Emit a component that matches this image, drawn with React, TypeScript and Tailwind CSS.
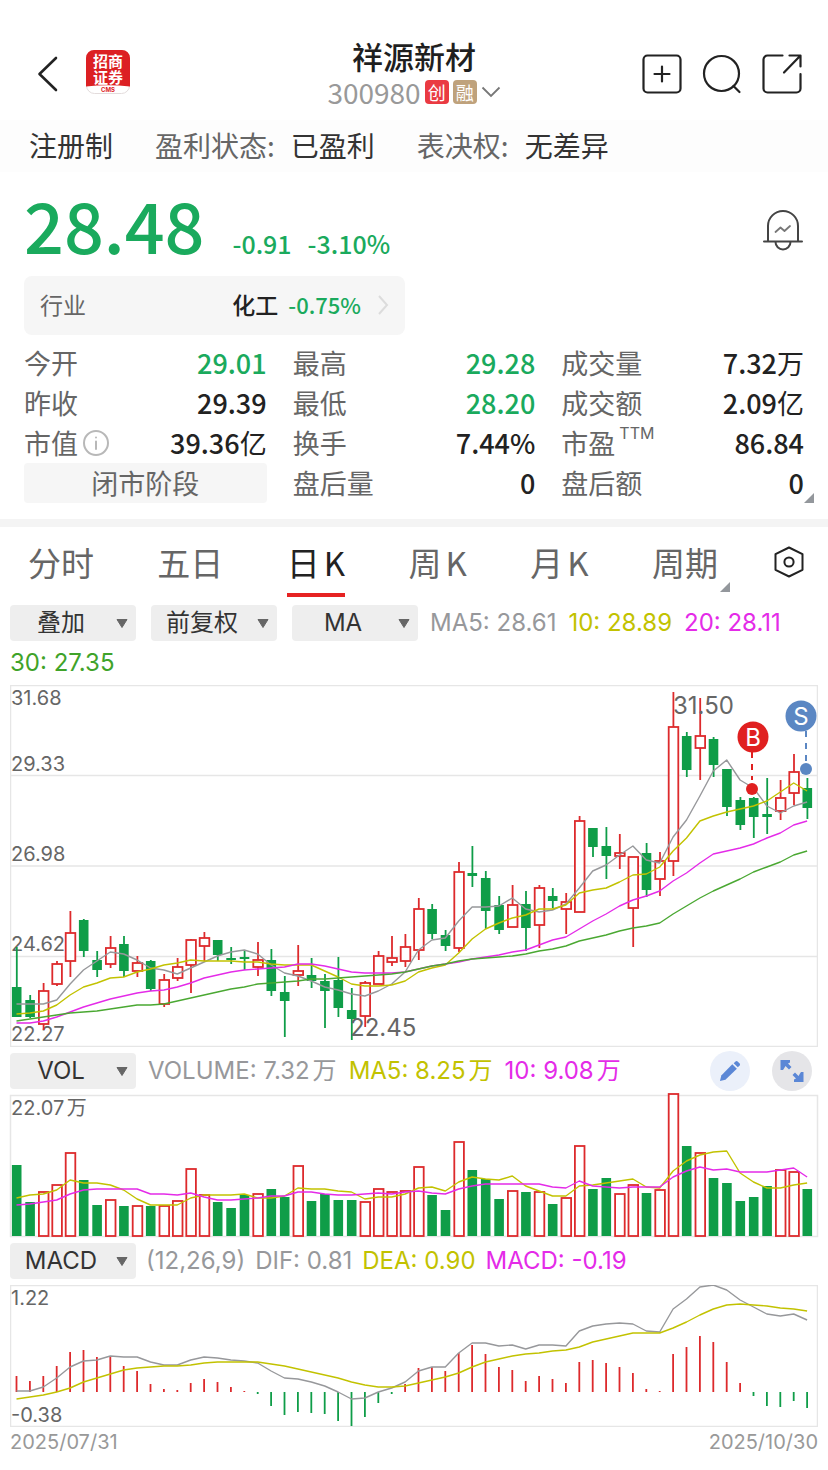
import { ReactNode } from "react";

const RED = "#dd2a2c";
const GREEN = "#0f9d48";
const GRAY = "#97989b";
const YELLOW = "#c2c200";
const MAGENTA = "#e42be8";
const LEAF = "#4aa832";

const STEP = 13.4;
const xAt = (i: number) => 16.5 + i * STEP;

type Candle = [up: 0 | 1, high: number, top: number, bottom: number, low: number];

const candles: Candle[] = [
  [0, 947, 987, 1017, 1017], [0, 995, 1000, 1017, 1018], [1, 983, 991, 1024, 1030], [1, 961, 964, 984, 986],
  [1, 911, 933, 961, 977], [0, 919, 920, 951, 957], [0, 951, 960, 970, 977], [1, 936, 948, 964, 968],
  [0, 936, 944, 971, 977], [1, 956, 963, 971, 977], [0, 960, 961, 989, 991], [1, 974, 980, 1004, 1007],
  [1, 958, 967, 978, 981], [1, 939, 940, 965, 993], [1, 932, 938, 946, 961], [0, 940, 940, 955, 961],
  [0, 947, 958, 960, 964], [0, 951, 957, 959, 970], [1, 942, 960, 967, 976], [0, 949, 960, 991, 996],
  [0, 976, 992, 1001, 1037], [1, 945, 971, 975, 986], [0, 958, 975, 981, 988], [0, 974, 981, 991, 1028],
  [0, 957, 980, 1008, 1017], [0, 988, 1010, 1019, 1040], [1, 981, 983, 1016, 1027], [1, 951, 956, 984, 984],
  [1, 936, 958, 962, 966], [1, 934, 947, 961, 967], [1, 898, 909, 950, 960], [0, 904, 909, 934, 939],
  [0, 930, 935, 946, 951], [1, 862, 872, 948, 952], [0, 846, 873, 876, 887], [0, 871, 878, 911, 929],
  [0, 896, 905, 930, 934], [1, 885, 905, 927, 927], [0, 891, 904, 928, 951], [1, 885, 888, 925, 948],
  [0, 888, 896, 901, 908], [1, 893, 902, 909, 934], [1, 816, 821, 912, 912], [0, 828, 828, 847, 857],
  [0, 827, 846, 856, 879], [1, 834, 853, 856, 869], [1, 857, 857, 908, 947], [0, 843, 853, 890, 897],
  [1, 852, 861, 879, 896], [1, 692, 727, 861, 876], [0, 732, 736, 770, 777], [1, 698, 736, 748, 780],
  [0, 737, 739, 765, 777], [0, 769, 769, 807, 816], [0, 797, 800, 825, 830], [0, 797, 798, 817, 838],
  [0, 778, 814, 817, 834], [1, 780, 798, 811, 820], [1, 754, 772, 793, 805], [0, 778, 788, 808, 819],
];

const ma5 = [
  1004, 1004, 1004, 1000, 984, 970, 961, 952, 954, 960, 968, 970, 974, 968, 962, 956, 952, 950, 954, 965,
  973, 976, 981, 987, 990, 994, 996, 991, 984, 972, 950, 940, 938, 921, 907, 907, 906, 898, 909, 912,
  910, 904, 888, 871, 865, 855, 846, 860, 863, 837, 820, 796, 771, 760, 780, 788, 806, 813, 806, 802,
];
const ma10 = [
  1014, 1013, 1011, 1005, 995, 987, 983, 978, 977, 972, 969, 965, 963, 960, 961, 961, 961, 962, 962, 964,
  965, 965, 965, 971, 977, 984, 986, 986, 985, 981, 972, 968, 965, 953, 939, 929, 923, 918, 915, 909,
  909, 905, 893, 890, 888, 882, 875, 874, 867, 851, 838, 821, 816, 812, 809, 806, 801, 792, 783, 791,
];
const ma20 = [
  1023, 1023, 1021, 1017, 1012, 1007, 1003, 999, 996, 993, 991, 990, 987, 983, 978, 975, 972, 970, 969, 968,
  967, 964, 964, 966, 969, 972, 973, 973, 973, 972, 969, 966, 964, 962, 959, 957, 955, 952, 950, 945,
  940, 937, 929, 921, 914, 906, 900, 896, 891, 881, 873, 863, 854, 851, 848, 844, 838, 833, 825, 821,
];
const ma30 = [
  1021, 1019, 1017, 1015, 1013, 1012, 1011, 1009, 1007, 1005, 1005, 1004, 1001, 998, 995, 992, 989, 987, 984, 983,
  982, 981, 979, 979, 978, 977, 976, 975, 974, 972, 969, 966, 964, 961, 959, 958, 957, 956, 954, 951,
  949, 946, 941, 938, 935, 931, 928, 926, 923, 914, 906, 898, 891, 885, 879, 872, 867, 862, 855, 851,
];

const volumes = [
  1165, 1202, 1192, 1185, 1153, 1180, 1205, 1200, 1206, 1206, 1206, 1206, 1201, 1169, 1195, 1202, 1208, 1195, 1194, 1189,
  1197, 1166, 1201, 1194, 1200, 1200, 1202, 1189, 1192, 1191, 1167, 1195, 1210, 1142, 1170, 1179, 1199, 1191, 1192, 1192,
  1204, 1198, 1146, 1189, 1178, 1194, 1185, 1193, 1190, 1094, 1146, 1153, 1178, 1183, 1201, 1197, 1186, 1170, 1172, 1189,
];
const volMa5 = [
  1198, 1195, 1194, 1190, 1180, 1183, 1183, 1185, 1190, 1199, 1205, 1205, 1205, 1198, 1195, 1195, 1195, 1194, 1198, 1198,
  1196, 1188, 1189, 1189, 1191, 1192, 1199, 1197, 1197, 1194, 1188, 1187, 1191, 1182, 1177, 1179, 1180, 1176, 1186, 1191,
  1196, 1196, 1186, 1185, 1183, 1181, 1179, 1187, 1188, 1171, 1161, 1155, 1152, 1151, 1173, 1182, 1188, 1188, 1185, 1183,
];
const volMa10 = [
  1205, 1204, 1202, 1200, 1194, 1190, 1189, 1189, 1189, 1189, 1194, 1194, 1195, 1193, 1197, 1200, 1200, 1199, 1198, 1196,
  1196, 1192, 1192, 1194, 1195, 1195, 1194, 1193, 1194, 1192, 1191, 1193, 1194, 1189, 1186, 1184, 1184, 1184, 1184, 1184,
  1187, 1188, 1181, 1186, 1187, 1188, 1187, 1187, 1187, 1177, 1171, 1167, 1170, 1169, 1172, 1172, 1172, 1170, 1168, 1177,
];

const macd = [
  1376, 1381, 1376, 1366, 1352, 1350, 1357, 1357, 1366, 1371, 1384, 1389, 1390, 1383, 1379, 1382, 1387, 1391, 1394, 1406,
  1415, 1412, 1413, 1414, 1421, 1426, 1417, 1403, 1394, 1384, 1368, 1367, 1371, 1353, 1345, 1354, 1367, 1370, 1381, 1376,
  1379, 1383, 1362, 1360, 1363, 1367, 1373, 1389, 1391, 1354, 1347, 1336, 1342, 1362, 1383, 1396, 1406, 1407, 1401, 1408,
];
const dif = [
  1391, 1391, 1387, 1378, 1367, 1361, 1360, 1356, 1357, 1357, 1362, 1365, 1365, 1360, 1357, 1358, 1360, 1361, 1363, 1371,
  1378, 1379, 1382, 1386, 1392, 1399, 1398, 1392, 1388, 1382, 1371, 1367, 1367, 1353, 1343, 1343, 1346, 1345, 1349, 1345,
  1345, 1346, 1331, 1326, 1324, 1323, 1324, 1331, 1332, 1309, 1299, 1287, 1285, 1290, 1300, 1307, 1314, 1316, 1314, 1320,
];
const dea = [
  1399, 1397, 1395, 1392, 1388, 1382, 1378, 1374, 1370, 1368, 1367, 1366, 1366, 1365, 1363, 1362, 1362, 1362, 1362, 1364,
  1366, 1369, 1372, 1375, 1378, 1382, 1385, 1387, 1387, 1386, 1383, 1380, 1377, 1373, 1367, 1362, 1359, 1356, 1354, 1353,
  1351, 1350, 1347, 1342, 1339, 1336, 1333, 1333, 1333, 1328, 1322, 1315, 1309, 1305, 1304, 1305, 1306, 1308, 1309, 1311,
];

const stats = [
  { label: "今开", value: "29.01", green: true },
  { label: "最高", value: "29.28", green: true },
  { label: "成交量", value: "7.32", unit: "万" },
  { label: "昨收", value: "29.39" },
  { label: "最低", value: "28.20", green: true },
  { label: "成交额", value: "2.09", unit: "亿" },
  { label: "市值", value: "39.36", unit: "亿", info: true },
  { label: "换手", value: "7.44%" },
  { label: "市盈", value: "86.84", sup: "TTM" },
];

const tabs = ["分时", "五日", "日K", "周K", "月K", "周期"];

function Line({ points, color }: { points: number[]; color: string }) {
  return (
    <polyline
      points={points.map((y, i) => `${xAt(i)},${y}`).join(" ")}
      fill="none"
      stroke={color}
      strokeWidth="1.4"
      strokeLinejoin="round"
    />
  );
}

function Bar({ i, up, top, bottom }: { i: number; up: boolean; top: number; bottom: number }) {
  return up ? (
    <rect x={xAt(i) - 4.4} y={top} width="9.6" height={Math.max(bottom - top, 2)} fill="#fff" stroke={RED} strokeWidth="1.8" />
  ) : (
    <rect x={xAt(i) - 4.6} y={top} width="9.6" height={Math.max(bottom - top, 2)} fill={GREEN} />
  );
}

function Corner({ className }: { className: string }) {
  return (
    <svg viewBox="0 0 10 10" className={`absolute size-2.5 ${className}`} aria-hidden="true">
      <path d="M10 0v10H0z" fill="#93979c" />
    </svg>
  );
}

function Picker({ label, value }: { label: string; value: string }) {
  return (
    <span className="relative inline-flex h-9 w-[126px] shrink-0">
      <select
        aria-label={label}
        defaultValue={value}
        className="h-9 w-full appearance-none rounded bg-[#eeeeee] pr-6 text-center text-2xl leading-9 text-[#333333]"
      >
        <option>{value}</option>
      </select>
      <svg viewBox="0 0 12 9" className="pointer-events-none absolute top-3.5 right-2 h-[9px] w-3" aria-hidden="true">
        <path d="M1 .5h10L6 8.5z" fill="#666" stroke="#666" strokeLinejoin="round" />
      </svg>
    </span>
  );
}

function Reading({ className, children }: { className: string; children: ReactNode }) {
  return <span className={`text-2xl leading-10 whitespace-nowrap [text-autospace:normal] ${className}`}>{children}</span>;
}

function Logo() {
  return (
    <svg viewBox="0 0 44 44" className="-mt-1 size-11" role="img" aria-label="招商证券">
      <rect x=".5" y=".5" width="43" height="43" rx="8" fill="#fff" stroke="#e3dcdc" />
      <path d="M0 36.500V8a8 8 0 0 1 8-8h28a8 8 0 0 1 8 8v28.500Q22 34 0 36.500z" fill="#dc2023" />
      <g textAnchor="middle">
        <text x="22" y="17" fill="#fff" fontSize="15" fontWeight="700">招商</text>
        <text x="22" y="33" fill="#fff" fontSize="15" fontWeight="700">证券</text>
        <text x="22" y="42" fill="#dc2023" fontSize="6" fontWeight="700" className="font-[Inter]">CMS</text>
      </g>
    </svg>
  );
}

function Header() {
  return (
    <header className="grid h-[112px] grid-cols-[1fr_auto_1fr] items-center px-[26px] pt-9">
      <div className="flex items-center gap-7 pl-2.5">
        <button aria-label="返回">
          <svg viewBox="0 0 22 38" className="h-[38px] w-[22px]" fill="none" stroke="#222" strokeWidth="2.600" strokeLinecap="round" strokeLinejoin="round">
            <path d="M20 3 3.500 19 20 35" />
          </svg>
        </button>
        <Logo />
      </div>
      <div className="flex flex-col items-center">
        <h1 className="text-[31px] leading-9 font-medium text-[#1f1f1f]">祥源新材</h1>
        <button className="flex h-9 items-center gap-1">
          <span className="text-[28px] leading-9 text-[#999999]">300980</span>
          <span className="size-6 rounded bg-[#ea3a42] text-center text-lg leading-6 text-white">创</span>
          <span className="size-6 rounded bg-[#bfa27c] text-center text-lg leading-6 text-white">融</span>
          <svg viewBox="0 0 20 12" className="h-3 w-5" fill="none" stroke="#777" strokeWidth="1.800" aria-hidden="true">
            <path d="M1.500 1.500 10 10l8.500-8.500" />
          </svg>
        </button>
      </div>
      <div className="flex justify-end gap-5">
        <button aria-label="添加自选">
          <svg viewBox="0 0 40 40" className="size-10" fill="none" stroke="#222" strokeWidth="2.200" strokeLinecap="round">
            <rect x="1.500" y="1.500" width="37" height="37" rx="4" />
            <path d="M12.500 20h15M20 12.500v15" />
          </svg>
        </button>
        <button aria-label="搜索">
          <svg viewBox="0 0 40 40" className="size-10" fill="none" stroke="#222" strokeWidth="2.200" strokeLinecap="round">
            <circle cx="19.500" cy="19.500" r="17.500" />
            <path d="m31.500 32 6 6" />
          </svg>
        </button>
        <button aria-label="分享">
          <svg viewBox="0 0 40 40" className="size-10" fill="none" stroke="#222" strokeWidth="2.200" strokeLinecap="round" strokeLinejoin="round">
            <path d="M20.500 1.500h-15a4 4 0 0 0-4 4v29a4 4 0 0 0 4 4h29a4 4 0 0 0 4-4V20" />
            <path d="M27.500 1.500h11v11M38 2 22 18.500" />
          </svg>
        </button>
      </div>
    </header>
  );
}

function Quote() {
  return (
    <section className="px-6 pt-3">
      <div className="flex items-center justify-between">
        <div className="flex items-baseline pb-3 text-[#1aaa5d]">
          <strong className="text-[70px] leading-20 font-medium">28.48</strong>
          <span className="ml-7 text-[25px] font-medium">-0.91</span>
          <span className="ml-4 text-[25px] font-medium">-3.10%</span>
        </div>
        <button aria-label="价格提醒">
          <svg viewBox="0 0 42 42" className="size-[42px]" fill="none" stroke="#444" strokeWidth="2" strokeLinecap="round" strokeLinejoin="round">
            <path d="M6 32V17a15 15 0 0 1 30 0v15M2 32.500h38M13.500 33a7.500 7.500 0 0 0 15 0" />
            <path d="m13.500 23 5-4.500 4 3.500 5.500-5" stroke="#777" strokeWidth="1.800" />
          </svg>
        </button>
      </div>
      <a href="#industry" className="flex h-[59px] w-[381px] items-center rounded-lg bg-[#f6f6f6] px-4 pb-0.5">
        <span className="flex-1 text-[23px] text-[#666666]">行业</span>
        <span className="text-[23px] font-medium text-[#222222]">化工</span>
        <span className="ml-2.5 text-[22px] font-medium text-[#1aaa5d]">-0.75%</span>
        <svg viewBox="0 0 12 22" className="ml-4 h-[22px] w-3" fill="none" stroke="#dcdcdc" strokeWidth="2" aria-hidden="true">
          <path d="m2 2 8 9-8 9" />
        </svg>
      </a>

      <dl className="relative mt-2 grid grid-cols-3 gap-x-[26px] text-[27px] leading-10 whitespace-nowrap text-[#666666]">
        {stats.map((s) => (
          <div key={s.label} className="flex h-10 items-center justify-between">
            <dt className="flex items-center">
              {s.label}
              {s.sup && <span className="-mt-5 ml-1 font-[Inter] text-base leading-4">{s.sup}</span>}
              {s.info && (
                <svg viewBox="0 0 28 28" className="ml-1 size-7" fill="none" stroke="#b8b8b8" strokeWidth="2" strokeLinecap="round" aria-hidden="true">
                  <circle cx="14" cy="14" r="12" />
                  <path d="M14 12.500V20M14 8.500v.1" />
                </svg>
              )}
            </dt>
            <dd className={s.green ? "font-medium text-[#1aaa5d]" : "font-medium text-[#222222]"}>
              {s.value}
              {s.unit && <span className="font-normal">{s.unit}</span>}
            </dd>
          </div>
        ))}
        <div className="h-10 rounded bg-[#f6f6f6] text-center">闭市阶段</div>
        <div className="flex justify-between">
          <dt>盘后量</dt>
          <dd className="font-medium text-[#222222]">0</dd>
        </div>
        <div className="flex justify-between">
          <dt>盘后额</dt>
          <dd className="font-medium text-[#222222]">0</dd>
        </div>
        <Corner className="-right-2.5 bottom-0" />
      </dl>
    </section>
  );
}

function Tabs() {
  return (
    <nav className="mt-4 flex h-[84px] items-start gap-14 border-t-8 border-[#f4f4f4] pr-6 pl-7">
      <div className="flex flex-1 justify-between">
        {tabs.map((tab) => (
          <button
            key={tab}
            className={`relative h-[70px] border-b-4 pt-1 text-[33px] leading-9 [text-autospace:normal] ${
              tab === "日K" ? "border-[#e62222] text-[#222222]" : "border-transparent text-[#666666]"
            }`}
          >
            {tab}
            {tab === "周期" && <Corner className="-right-3 bottom-px" />}
          </button>
        ))}
      </div>
      <button aria-label="设置" className="h-[70px]">
        <svg viewBox="0 0 30 32" className="h-8 w-[30px]" fill="none" stroke="#222" strokeWidth="2" strokeLinejoin="round">
          <path d="M15 1.500 28.500 8.200v15.600L15 30.500 1.500 23.800V8.200z" />
          <circle cx="15" cy="16" r="4.600" />
        </svg>
      </button>
    </nav>
  );
}

function PriceChart() {
  return (
    <svg viewBox="10 685 808 362" className="block w-full font-[Inter]" role="img" aria-label="日K线">
      <rect x="10.500" y="685.500" width="807" height="361" fill="none" stroke="#e6e6e6" strokeWidth="1.500" />
      <path d="M10 775.500h808M10 866h808M10 956.500h808" stroke="#e6e6e6" strokeWidth="1.500" />
      <g fill="#666" fontSize="20">
        <text x="11" y="705">31.68</text>
        <text x="11" y="771">29.33</text>
        <text x="11" y="861">26.98</text>
        <text x="11" y="951">24.62</text>
        <text x="11" y="1041">22.27</text>
      </g>
      {candles.map(([up, high, top, bottom, low], i) => (
        <g key={i}>
          <path d={`M${xAt(i) + 0.3} ${high}V${low}`} stroke={up ? RED : GREEN} strokeWidth="1.8" />
          <Bar i={i} up={up === 1} top={top} bottom={bottom} />
        </g>
      ))}
      <Line points={ma5} color={GRAY} />
      <Line points={ma10} color={YELLOW} />
      <Line points={ma20} color={MAGENTA} />
      <Line points={ma30} color={LEAF} />
      <g fill="#666" fontSize="24">
        <text x="673" y="714">31.50</text>
        <text x="350" y="1036">22.45</text>
      </g>
      <path d="M752 752v28" stroke="#e02020" strokeWidth="2" strokeDasharray="6 6" />
      <circle cx="752" cy="789" r="6" fill="#e02020" />
      <circle cx="753" cy="737" r="15.500" fill="#e02020" />
      <path d="M806 731v30" stroke="#5b87c3" strokeWidth="2" strokeDasharray="6 6" />
      <circle cx="806" cy="769" r="6" fill="#5b87c3" />
      <circle cx="801" cy="716" r="15.500" fill="#5b87c3" />
      <g fill="#fff" fontSize="24" textAnchor="middle">
        <text x="753" y="746">B</text>
        <text x="801" y="725">S</text>
      </g>
    </svg>
  );
}

function VolumeChart() {
  return (
    <svg viewBox="10 1095 808 142" className="block w-full overflow-visible font-[Inter,'Noto_Sans_CJK_SC']" role="img" aria-label="成交量">
      <rect x="10.500" y="1095.500" width="807" height="141" fill="none" stroke="#e6e6e6" strokeWidth="1.500" />
      <text x="11" y="1115" fill="#666" fontSize="20" className="[text-autospace:normal]">22.07万</text>
      {volumes.map((top, i) => (
        <Bar key={i} i={i} up={candles[i][0] === 1} top={top} bottom={1236} />
      ))}
      <Line points={volMa5} color={YELLOW} />
      <Line points={volMa10} color={MAGENTA} />
    </svg>
  );
}

function MacdChart() {
  return (
    <svg viewBox="10 1285 808 142" className="block w-full font-[Inter]" role="img" aria-label="MACD">
      <rect x="10.500" y="1285.500" width="807" height="141" fill="none" stroke="#e6e6e6" strokeWidth="1.500" />
      <g fill="#666" fontSize="20">
        <text x="11" y="1305">1.22</text>
        <text x="11" y="1422">-0.38</text>
      </g>
      {macd.map((y, i) => (
        <path key={i} d={`M${xAt(i)} 1392V${y}`} stroke={y < 1392 ? RED : GREEN} strokeWidth="1.8" />
      ))}
      <Line points={dif} color={GRAY} />
      <Line points={dea} color={YELLOW} />
    </svg>
  );
}

export default function App() {
  return (
    <main className="min-h-screen bg-white font-['Noto_Sans_CJK_SC',sans-serif]">
      <Header />
      <div className="mt-2 flex h-[52px] items-center bg-[#fdfdfd] px-[29px] pb-0.5 text-[28px] whitespace-nowrap text-[#333333]">
        <span>注册制</span>
        <span className="ml-[42px] text-[#666666]">盈利状态:</span>
        <span className="ml-4">已盈利</span>
        <span className="ml-[42px] text-[#666666]">表决权:</span>
        <span className="ml-4">无差异</span>
      </div>
      <Quote />
      <Tabs />

      <section className="px-2.5 font-[Inter,'Noto_Sans_CJK_SC',sans-serif]">
        <div className="flex flex-wrap items-center gap-x-3 pb-0.5">
          <div className="flex gap-[15px]">
            <Picker label="叠加" value="叠加" />
            <Picker label="复权" value="前复权" />
            <Picker label="主图指标" value="MA" />
          </div>
          <Reading className="text-[#97989b]">MA5: 28.61</Reading>
          <Reading className="text-[#c2c200]">10: 28.89</Reading>
          <Reading className="text-[#e42be8]">20: 28.11</Reading>
          <Reading className="text-[#3fa32a]">30: 27.35</Reading>
        </div>
        <PriceChart />

        <div className="flex h-12 items-center gap-3 pr-1.5">
          <Picker label="成交量指标" value="VOL" />
          <Reading className="text-[#97989b]">VOLUME: 7.32万</Reading>
          <Reading className="text-[#c2c200]">MA5: 8.25万</Reading>
          <Reading className="text-[#e42be8]">10: 9.08万</Reading>
          <button aria-label="画线" className="ml-auto flex size-10 shrink-0 items-center justify-center rounded-full bg-[#ebf0fa]">
            <svg viewBox="0 0 24 24" className="size-[22px]" fill="#5b87d6">
              <path d="M1 23 2.500 17 14.500 4.500 19.500 9.500 7 21.500z" />
              <path d="m16 3.500 2-2q1.200-1 2.300 0l2.200 2.200q1 1.200 0 2.300l-2 2z" />
            </svg>
          </button>
          <button aria-label="全屏" className="ml-2.5 flex size-10 shrink-0 items-center justify-center rounded-full bg-[#e5e5e8]">
            <svg viewBox="0 0 24 24" className="size-6" fill="#5b87d6">
              <path d="M.5 1h9.500v2.500L8 4.500l3.500 3.500-2.500 2.500L5.500 7 4 9.500 3 11H.5z" />
              <path d="M23.500 23H14v-2.500l2-1-3.500-3.500 2.500-2.500 3.500 3.500 1.500-2.500 1-1.500h2.500z" />
            </svg>
          </button>
        </div>
        <VolumeChart />

        <div className="flex h-12 items-center gap-2.5">
          <Picker label="副图指标" value="MACD" />
          <Reading className="text-[#97989b]">(12,26,9)</Reading>
          <Reading className="text-[#97989b]">DIF: 0.81</Reading>
          <Reading className="text-[#c2c200]">DEA: 0.90</Reading>
          <Reading className="text-[#e42be8]">MACD: -0.19</Reading>
        </div>
        <MacdChart />
        <div className="flex justify-between text-xl leading-[30px] text-[#999999]">
          <time>2025/07/31</time>
          <time>2025/10/30</time>
        </div>
      </section>
    </main>
  );
}
